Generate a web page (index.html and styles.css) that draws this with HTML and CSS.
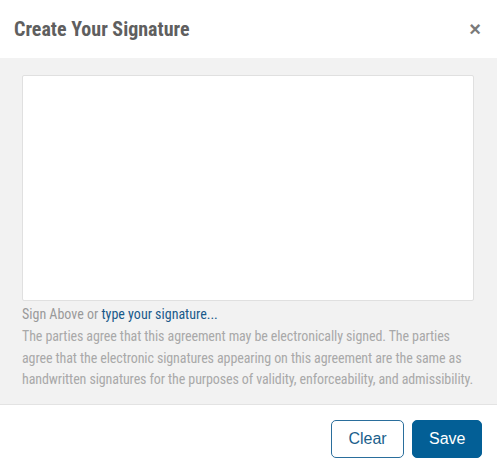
FILE: index.html
```html
<!DOCTYPE html>
<html>
<head>
<meta charset="utf-8">
<link rel="stylesheet" href="styles.css">
</head>
<body>
<div class="modal">
  <div class="header">
    <h1 class="title">Create Your Signature</h1>
    <span class="close">&times;</span>
  </div>
  <div class="body">
    <div class="pad"></div>
    <div class="hint">Sign Above or <a class="link">type your signature...</a></div>
    <p class="legal">The parties agree that this agreement may be electronically signed. The parties agree that the electronic signatures appearing on this agreement are the same as handwritten signatures for the purposes of validity, enforceability, and admissibility.</p>
  </div>
  <div class="footer">
    <button class="btn btn-clear">Clear</button>
    <button class="btn btn-save">Save</button>
  </div>
</div>
</body>
</html>
```
FILE: styles.css
```css
html, body { margin: 0; padding: 0; background: #fff; }
.modal { width: 497px; height: 474px; display: flex; flex-direction: column; font-family: "Roboto Condensed", "Liberation Sans Narrow", "DejaVu Sans Condensed", Roboto, sans-serif; }
.header { flex-shrink: 0; height: 58px; display: flex; align-items: center; justify-content: space-between; padding: 0 14px; box-sizing: border-box; }
.title { margin: 0; font-size: 20px; font-weight: 700; color: #5f5f5f; }
.close { font-family: "Liberation Sans", Arial, sans-serif; font-size: 20px; font-weight: 700; color: #7a7a7a; margin-right: 2px; }
.body { flex-shrink: 0; background: #f2f2f2; padding: 17px 23px 13px 22px; border-bottom: 1px solid #e3e3e3; }
.pad { height: 224px; background: #fff; border: 1px solid #e0e0e0; border-radius: 2px; }
.hint { margin-top: 4px; font-size: 14px; color: #9a9a9a; line-height: 18px; }
.link { color: #1a5a8a; text-decoration: none; }
.legal { margin: 3px 0 0; font-size: 14px; letter-spacing: -0.1px; line-height: 21.7px; color: #a9a9a9; }
.footer { flex-shrink: 0; display: flex; justify-content: flex-end; gap: 8px; padding: 15px 15px 0 0; }
.btn { height: 38px; border-radius: 5px; font-family: "Liberation Sans", Arial, sans-serif; font-size: 16px; padding: 0 16px; cursor: pointer; }
.btn-clear { background: #fff; border: 1px solid #2a6e9c; color: #1b5f8c; width: 73px; }
.btn-save { background: #035f96; border: 1px solid #035f96; color: #fff; width: 70px; }
```
